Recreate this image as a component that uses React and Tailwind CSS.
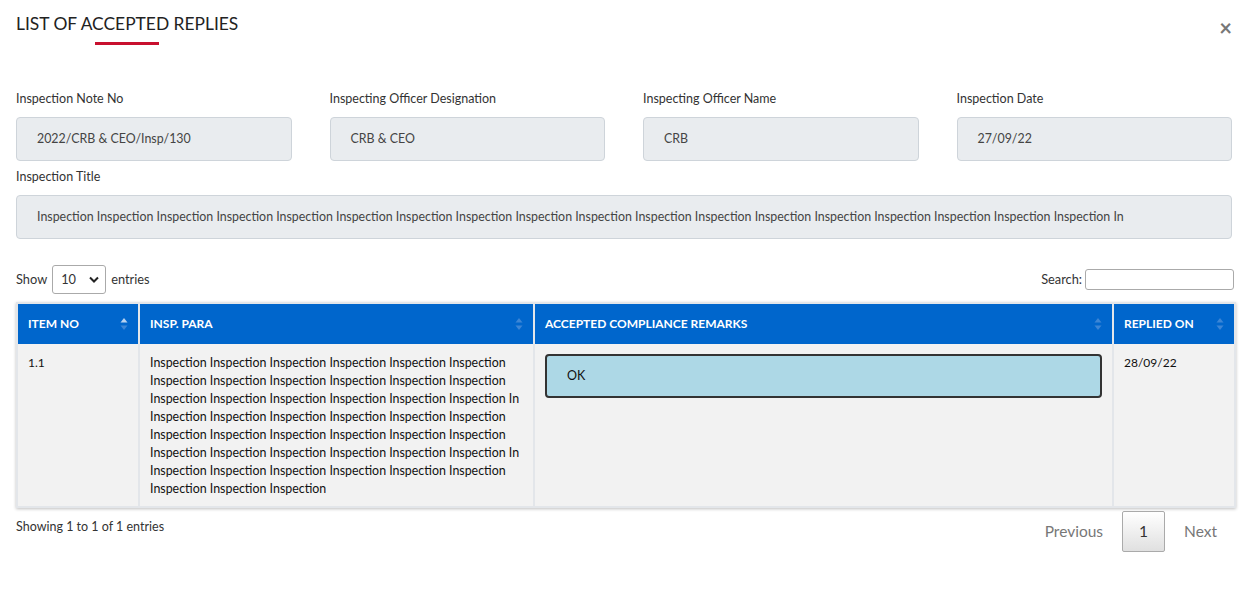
import React from 'react'

const font = { fontFamily: 'Lato, "Open Sans", sans-serif' }

const fields = [
    { label: 'Inspection Note No', value: '2022/CRB & CEO/Insp/130' },
    { label: 'Inspecting Officer Designation', value: 'CRB & CEO' },
    { label: 'Inspecting Officer Name', value: 'CRB' },
    { label: 'Inspection Date', value: '27/09/22' },
]

const paraLines = [
    'Inspection Inspection Inspection Inspection Inspection Inspection',
    'Inspection Inspection Inspection Inspection Inspection Inspection',
    'Inspection Inspection Inspection Inspection Inspection Inspection In',
    'Inspection Inspection Inspection Inspection Inspection Inspection',
    'Inspection Inspection Inspection Inspection Inspection Inspection',
    'Inspection Inspection Inspection Inspection Inspection Inspection In',
    'Inspection Inspection Inspection Inspection Inspection Inspection',
    'Inspection Inspection Inspection',
]

const SortIcon = ({ active }) => (
    <svg width="8" height="14" viewBox="0 0 8 14" className="shrink-0">
        <path d="M4 1 L7.5 5.5 L0.5 5.5 Z" fill={active ? '#b9d3f0' : '#3c86d6'} />
        <path d="M4 13 L7.5 8.5 L0.5 8.5 Z" fill="#3c86d6" />
    </svg>
)

const App = () => {
    const title = Array(18).fill('Inspection').join(' ') + ' In'

    return (
        <div className="w-[1248px] h-[610px] bg-white text-[#212529] overflow-hidden" style={font}>
            {/* header */}
            <div className="flex items-start justify-between pl-4 pr-[16px] pt-[12px]">
                <div>
                    <h2 className="text-[17.4px] leading-[24px] text-[#222] font-normal">LIST OF ACCEPTED REPLIES</h2>
                    <div className="ml-[79px] mt-[6px] w-[64px] h-[3px] bg-[#c8102e]"></div>
                </div>
                <button className="mt-[5px] text-[#777] text-[22px] leading-none font-bold">&times;</button>
            </div>

            {/* info fields */}
            <div className="px-4 mt-[46px]">
                <div className="grid grid-cols-4 gap-x-[38px]">
                    {fields.map((f) => (
                        <div key={f.label}>
                            <div className="text-[12.5px] leading-[16px] text-[#333]">{f.label}</div>
                            <div className="mt-[10px] h-[44px] flex items-center pt-[1px] px-[20px] bg-[#e9ecef] border border-[#ced4da] rounded-[4px] text-[12.4px] text-[#444]">
                                {f.value}
                            </div>
                        </div>
                    ))}
                </div>
                <div className="mt-[8px] text-[12.5px] leading-[16px] text-[#333]">Inspection Title</div>
                <div className="mt-[10px] h-[44px] flex items-center pt-[1px] px-[20px] bg-[#e9ecef] border border-[#ced4da] rounded-[4px] text-[12.4px] text-[#444] whitespace-nowrap overflow-hidden">
                    {title}
                </div>
            </div>

            {/* table controls */}
            <div className="pl-4 pr-[14px] mt-[26px] flex items-center justify-between">
                <div className="flex items-center text-[12.8px] text-[#333]">
                    <span>Show</span>
                    <div className="ml-[5px] mr-[5px] w-[54px] h-[29px] border border-[#aaa] rounded-[3px] flex items-center justify-between pl-[8px] pr-[6px] bg-white">
                        <span>10</span>
                        <svg width="10" height="7" viewBox="0 0 10 7"><path d="M1 1.5 L5 5.5 L9 1.5" stroke="#222" strokeWidth="2" fill="none" /></svg>
                    </div>
                    <span>entries</span>
                </div>
                <div className="flex items-center gap-[3px] text-[12.8px] text-[#333]">
                    <span>Search:</span>
                    <div className="w-[149px] h-[21px] border border-[#aaa] rounded-[3px] bg-white"></div>
                </div>
            </div>

            {/* table */}
            <div className="ml-4 w-[1220px] mt-[8px] border-2 border-[#e3e6ea] shadow-[0_1px_3px_rgba(0,0,0,0.25)]">
                <div className="grid grid-cols-[120px_393px_577px_120px] gap-x-[2px] bg-[#e3e6ea] text-[12px]">
                    <div className="bg-[#0066cc] h-[40px] flex items-center justify-between px-[10px] text-white font-bold">
                        <span>ITEM NO</span><SortIcon active />
                    </div>
                    <div className="bg-[#0066cc] h-[40px] flex items-center justify-between px-[10px] text-white font-bold">
                        <span>INSP. PARA</span><SortIcon />
                    </div>
                    <div className="bg-[#0066cc] h-[40px] flex items-center justify-between px-[10px] text-white font-bold">
                        <span>ACCEPTED COMPLIANCE REMARKS</span><SortIcon />
                    </div>
                    <div className="bg-[#0066cc] h-[40px] flex items-center justify-between px-[10px] text-white font-bold">
                        <span>REPLIED ON</span><SortIcon />
                    </div>

                    <div className="bg-[#f2f2f2] px-[10px] pt-[10px] text-[#111]">1.1</div>
                    <div className="bg-[#f2f2f2] px-[10px] pt-[10px] pb-[8px] text-[12.4px] leading-[18px] text-[#111]">
                        {paraLines.map((l, i) => (
                            <div key={i} className="whitespace-nowrap">{l}</div>
                        ))}
                    </div>
                    <div className="bg-[#f2f2f2] px-[10px] pt-[10px]">
                        <div className="h-[44px] bg-[#add8e6] border-2 border-[#333] rounded-[4px] flex items-center px-[20px] text-[12.5px] text-[#111]">OK</div>
                    </div>
                    <div className="bg-[#f2f2f2] px-[10px] pt-[10px] text-[#111]">28/09/22</div>
                </div>
            </div>

            {/* footer */}
            <div className="px-4 mt-[3px] flex items-start justify-between">
                <div className="mt-[7px] text-[12.5px] text-[#333]">Showing 1 to 1 of 1 entries</div>
                <div className="flex items-center text-[15.5px]">
                    <span className="pl-[18px] pr-[19px] text-[#777]">Previous</span>
                    <span className="w-[43px] h-[41px] flex items-center justify-center border border-[#aaa] rounded-[2px] bg-gradient-to-b from-white to-[#e0e0e0] text-[#333]">1</span>
                    <span className="pl-[19px] pr-[15px] text-[#777]">Next</span>
                </div>
            </div>
        </div>
    )
}

export default App
